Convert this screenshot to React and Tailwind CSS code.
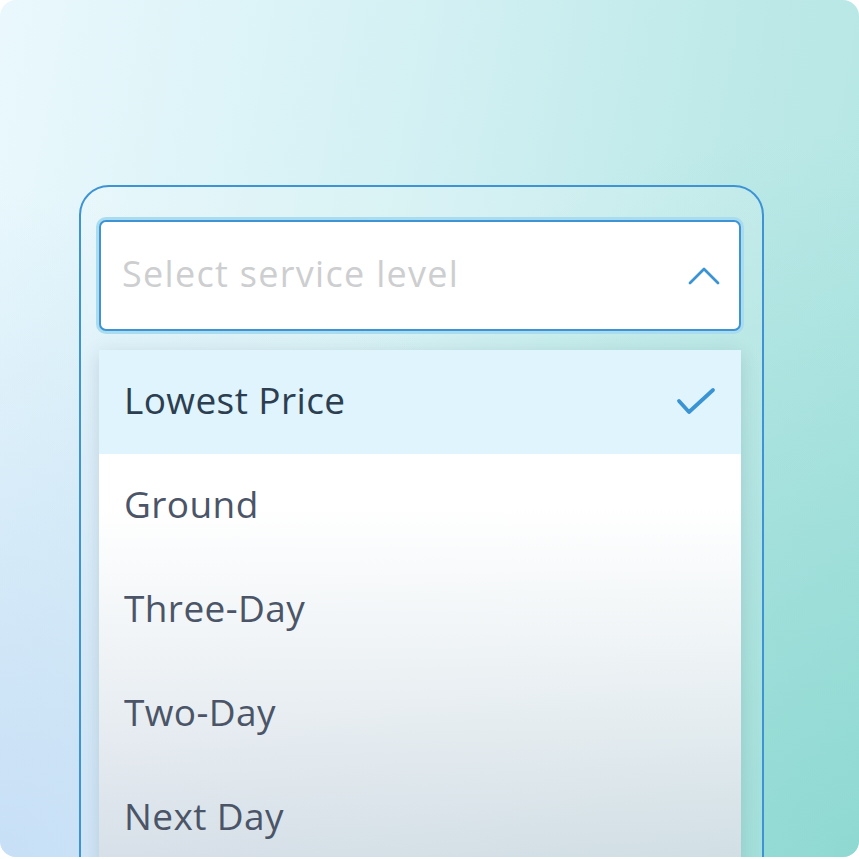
import React from 'react';

const options = [
  { id: 1, label: 'Lowest Price', selected: true },
  { id: 2, label: 'Ground' },
  { id: 3, label: 'Three-Day' },
  { id: 4, label: 'Two-Day' },
  { id: 5, label: 'Next Day' },
];

const ChevronUp = () => (
  <svg width="32" height="20" viewBox="0 0 32 20" fill="none">
    <path d="M2 17 L16 3 L30 17" stroke="#3a94d4" strokeWidth="2.8" strokeLinecap="round" strokeLinejoin="round" />
  </svg>
);

const Check = () => (
  <svg width="40" height="30" viewBox="0 0 40 30" fill="none">
    <path d="M3 14 L13 25 L37 3" stroke="#3a94d4" strokeWidth="3.8" strokeLinecap="round" strokeLinejoin="round" />
  </svg>
);

const App = () => {
  return (
    <div className="w-[859px] h-[859px] bg-white" style={{ fontFamily: '"Open Sans", Lato, sans-serif' }}>
      <div className="relative w-[859px] h-[857px] rounded-2xl overflow-hidden bg-[linear-gradient(100deg,#eaf8fd_0%,#d2f0f3_45%,#bde9e8_75%,#b2e6e3_100%)]">
        <div className="absolute inset-0 bg-[radial-gradient(ellipse_at_0%_100%,rgba(198,222,246,0.95)_0%,rgba(198,222,246,0)_55%)]" />
        <div className="absolute inset-0 bg-[radial-gradient(ellipse_at_100%_100%,rgba(128,211,203,0.7)_0%,rgba(128,211,203,0)_60%)]" />

        <div className="relative pt-[185px] pl-[79px]">
          <div className="w-[685px] h-[720px] rounded-[30px] border-2 border-[#3d93d4] bg-white/15 pl-[18px] pr-[21px] pt-[33px]">
            <div className="h-[111px] rounded-[7px] border-2 border-[#3d93d4] bg-white ring-[3px] ring-[#a9dcef] flex items-center justify-between pl-[21px] pr-[19px]">
              <span className="text-[36px] text-[#cdced0] tracking-[1.3px] leading-none pb-[4px]">Select service level</span>
              <ChevronUp />
            </div>

            <div className="mt-[19px] bg-[linear-gradient(180deg,#ffffff_30%,rgba(242,245,247,0.97)_55%,rgba(214,221,229,0.86)_100%)] shadow-[0_4px_18px_rgba(40,70,90,0.16)]">
              {options.map(opt => (
                <div
                  key={opt.id}
                  className={`h-[104px] flex items-center justify-between pl-[25px] pr-[25px] ${opt.selected ? 'bg-[#dff4fd]' : ''}`}
                >
                  <span className={`text-[37px] leading-none tracking-[0.4px] pb-[6px] ${opt.selected ? 'text-[#2c3e50]' : 'text-[#4b5567]'}`}>
                    {opt.label}
                  </span>
                  {opt.selected && <Check />}
                </div>
              ))}
            </div>
          </div>
        </div>
      </div>
    </div>
  );
};

export default App;
